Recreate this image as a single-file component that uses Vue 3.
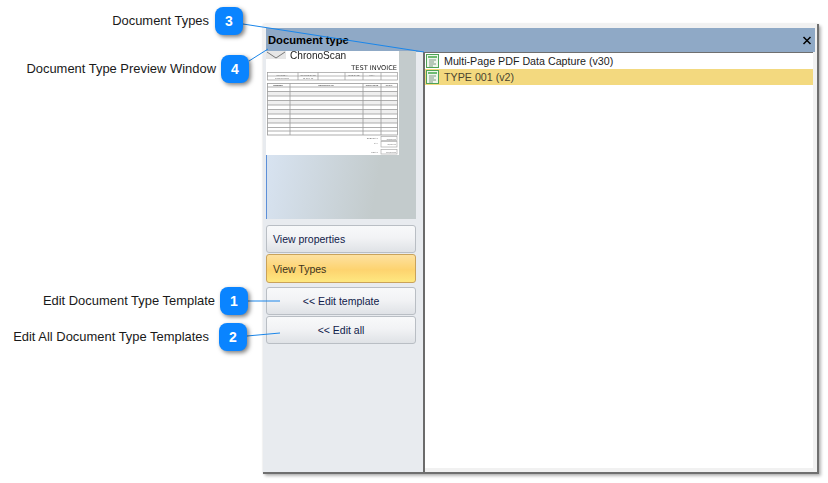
<script setup>
const pins = [
  { n: 3, label: 'Document Types', x: 215, y: 7, end: 209 },
  { n: 4, label: 'Document Type Preview Window', x: 221, y: 55, end: 216 },
  { n: 1, label: 'Edit Document Type Template', x: 220, y: 287, end: 215 },
  { n: 2, label: 'Edit All Document Type Templates', x: 219, y: 323, end: 209 }
]
const links = [
  [243, 24, 424, 52],
  [249, 61, 268, 49],
  [248, 301, 280, 301],
  [247, 336, 280, 333]
]
const docs = [
  { text: 'Multi-Page PDF Data Capture (v30)', on: false },
  { text: 'TYPE 001 (v2)', on: true }
]
const rowYs = [87, 91.5, 96, 100.5, 105, 109.5, 114, 118.5, 123, 127.5, 131]
const metaCols = [298, 318, 345, 363, 381]
const mainCols = [290, 363, 381]
const shaded = [91.5, 100.5, 109.5, 118.5]
</script>

<template>
  <div class="page">
    <div class="window">
      <header class="title">
        <span>Document type</span>
        <svg class="close" width="10" height="9" viewBox="0 0 10 9">
          <path d="M1.5 1 8.5 8M8.5 1 1.5 8" stroke="#000" stroke-width="1.5" fill="none" />
        </svg>
      </header>
      <div class="body">
        <aside class="side">
          <div class="preview">
            <svg class="invoice" width="133" height="104" viewBox="266 51 133 104">
              <rect x="266" y="51" width="133" height="104" fill="#fff" />
              <rect x="266" y="51" width="20" height="8" fill="#e6e6e6" />
              <path d="M267 52 276 58 285 52" fill="none" stroke="#777" stroke-width="1" />
              <text x="290" y="59" class="logo">ChronoScan</text>
              <text x="397" y="70" text-anchor="end" class="heading">TEST INVOICE</text>

              <g fill="none" stroke="#999" stroke-width=".7">
                <rect x="267.5" y="72.5" width="130" height="7.5" />
                <path d="M267 76H397" />
                <path v-for="c in metaCols" :key="c" :d="`M${c} 72.5V80`" />
              </g>
              <text x="282" y="75.5" text-anchor="middle" class="tiny">INVOICE #</text>
              <text x="282" y="79" text-anchor="middle" class="tiny">DOC0000123</text>
              <text x="308" y="75.5" text-anchor="middle" class="tiny">INVOICE DATE</text>
              <text x="308" y="79" text-anchor="middle" class="tiny">15-Sep-15</text>
              <text x="354" y="75.5" text-anchor="middle" class="tiny">DUE DATE</text>
              <text x="372" y="75.5" text-anchor="middle" class="tiny">PO #</text>

              <rect v-for="y in shaded" :key="y" x="268" :y="y" width="129" height="4.5" fill="#efefef" />
              <g fill="none" stroke="#999" stroke-width=".8">
                <rect x="267.5" y="83.5" width="130" height="51.5" />
                <path v-for="y in rowYs" :key="y" :d="`M267.5 ${y}H397.5`" />
                <path v-for="c in mainCols" :key="c" :d="`M${c} 83.5V135`" />
              </g>
              <text x="278" y="86.2" text-anchor="middle" class="tiny bold">NUMBER</text>
              <text x="326" y="86.2" text-anchor="middle" class="tiny bold">DESCRIPTION</text>
              <text x="372" y="86.2" text-anchor="middle" class="tiny bold">UNIT PRICE</text>
              <text x="389" y="86.2" text-anchor="middle" class="tiny bold">TOTAL</text>

              <g fill="none" stroke="#aaa" stroke-width=".7">
                <rect x="381" y="136.5" width="16" height="4" />
                <rect x="381" y="141.5" width="16" height="5.5" />
                <rect x="381" y="149.5" width="16" height="4.5" />
              </g>
              <text x="378" y="139" text-anchor="end" class="tiny">SUBTOTAL</text>
              <text x="378" y="143.5" text-anchor="end" class="tiny">TAX</text>
              <text x="378" y="152.5" text-anchor="end" class="tiny">TOTAL</text>
              <text x="396" y="139.5" text-anchor="end" class="tiny">11,234.56</text>
              <text x="396" y="145" text-anchor="end" class="tiny">3,634.00</text>
              <text x="396" y="153" text-anchor="end" class="tiny">15,869.56</text>
            </svg>
          </div>
          <div class="tabs">
            <button class="btn left">View properties</button>
            <button class="btn left active">View Types</button>
          </div>
          <div class="actions">
            <button class="btn">&lt;&lt; Edit template</button>
            <button class="btn">&lt;&lt; Edit all</button>
          </div>
        </aside>
        <main class="list">
          <div v-for="d in docs" :key="d.text" class="row" :class="{ on: d.on }">
            <svg width="13" height="14" viewBox="0 0 13 14">
              <rect x=".5" y=".5" width="12" height="13" fill="#eef6ec" stroke="#4fa356" />
              <rect x="2" y="2" width="9" height="2" fill="#6dbb70" />
              <path d="M3 6H10M3 8H8M3 10H10M3 12H7" stroke="#7f9a84" stroke-width="1" />
            </svg>
            <span>{{ d.text }}</span>
          </div>
        </main>
      </div>
    </div>

    <svg class="links" width="828" height="483" viewBox="0 0 828 483">
      <line v-for="(l, i) in links" :key="i" :x1="l[0]" :y1="l[1]" :x2="l[2]" :y2="l[3]" stroke="#1a86ea" stroke-width="1" />
    </svg>

    <template v-for="p in pins" :key="p.n">
      <div class="pin-label" :style="{ right: 828 - p.end + 'px', top: p.y + 14 - 9 + 'px' }">{{ p.label }}</div>
      <div class="pin" :style="{ left: p.x + 'px', top: p.y + 'px' }">{{ p.n }}</div>
    </template>
  </div>
</template>

<style>
html, body { margin: 0; background: #fff; }
</style>

<style scoped>
.page {
  position: relative;
  width: 828px;
  height: 483px;
  overflow: hidden;
  padding-top: 24px;
  box-sizing: border-box;
  font-family: "Liberation Sans", Arial, sans-serif;
}
.window {
  margin-left: 263px;
  width: 556px;
  height: 450px;
  box-sizing: border-box;
  padding: 4px 0 0 3px;
  background: #f1f1f1;
  border-right: 2px solid #6f6f6f;
  border-bottom: 2px solid #6f6f6f;
  box-shadow: 2px 2px 3px rgba(0, 0, 0, .28), 0 0 2px rgba(0, 0, 0, .12);
  display: flex;
  flex-direction: column;
}
.title {
  height: 24px;
  margin-right: 2px;
  flex: none;
  display: flex;
  align-items: center;
  justify-content: space-between;
  padding: 0 3px 0 2px;
  box-sizing: border-box;
  background: #8fa9c6;
  font-size: 11.2px;
  font-weight: 700;
  color: #000;
}
.body {
  flex: 1;
  display: flex;
  min-height: 0;
}
.side {
  width: 157px;
  flex: none;
  margin-left: -3px;
  padding-left: 3px;
  box-sizing: content-box;
  background: #e8ebef;
  border-right: 2px solid #6b6b6b;
}
.preview {
  width: 150px;
  height: 168px;
  background: linear-gradient(100deg, #dbe7f7 0%, #c3cbcc 75%);
  box-shadow: inset 1px 0 0 #5c8fd8;
}
.invoice {
  display: block;
  margin-top: -1px;
  filter: blur(.35px);
}
.logo { font: 10.1px "Liberation Sans", sans-serif; fill: #222; }
.heading { font: 6.6px "DejaVu Sans", sans-serif; fill: #222; }
.tiny { font: 2.2px "Liberation Sans", sans-serif; fill: #666; }
.bold { font-weight: 700; fill: #444; }
.tabs {
  margin-top: 6px;
  display: flex;
  flex-direction: column;
  gap: 1px;
}
.actions {
  margin-top: 4px;
  display: flex;
  flex-direction: column;
  gap: 1px;
}
.btn {
  display: block;
  width: 150px;
  height: 28px;
  padding: 0;
  box-sizing: border-box;
  border: 1px solid #b9bec4;
  border-radius: 3px;
  background: linear-gradient(#f8f9fa, #f2f3f5 45%, #dfe2e6);
  font: 10.5px "Liberation Sans", Arial, sans-serif;
  color: #10204a;
  text-align: center;
}
.left { text-align: left; padding-left: 6px; }
.active {
  height: 29px;
  border-color: #c9a25a;
  background: linear-gradient(#fde1a0, #fdd36f 55%, #fee880);
  color: #3a3320;
}
.list {
  flex: none;
  width: 388px;
  margin-bottom: 4px;
  background: #fff;
  box-shadow: inset 0 1px 0 #6f6f6f;
  padding-top: 1px;
  box-sizing: border-box;
}
.row {
  height: 16px;
  display: flex;
  align-items: center;
  gap: 5px;
  padding-left: 1px;
  font-size: 10.7px;
  color: #1c1c1c;
}
.row svg { flex: none; }
.row.on { background: #f3d97f; color: #4a4530; }
.links {
  position: absolute;
  left: 0;
  top: 0;
  pointer-events: none;
}
.pin {
  position: absolute;
  width: 28px;
  height: 28px;
  border-radius: 8px;
  background: #0a84ff;
  color: #fff;
  font-weight: 700;
  font-size: 14px;
  line-height: 28px;
  text-align: center;
  box-shadow: 2px 2px 4px rgba(0, 0, 0, .5);
}
.pin-label {
  position: absolute;
  font-size: 12.95px;
  line-height: 18px;
  white-space: nowrap;
  color: #1a1a1a;
}
</style>
